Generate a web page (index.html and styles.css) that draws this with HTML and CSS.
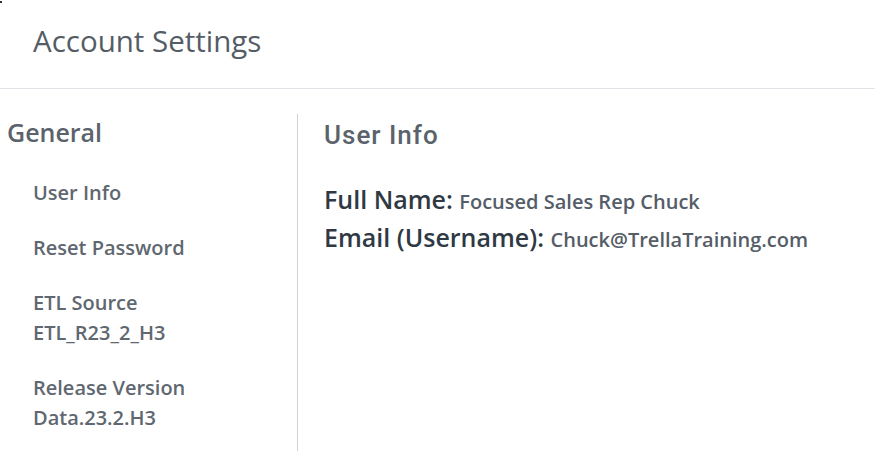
FILE: index.html
```html
<!DOCTYPE html>
<html lang="en">
<head>
<meta charset="utf-8">
<title>Account Settings</title>
<link rel="stylesheet" href="styles.css">
</head>
<body>
<span class="corner-dot"></span>
<header class="page-header">
  <h1 class="page-title">Account Settings</h1>
</header>
<div class="layout">
  <aside class="sidebar">
    <h2 class="sidebar-title">General</h2>
    <ul class="nav">
      <li class="nav-item">User Info</li>
      <li class="nav-item">Reset Password</li>
      <li class="nav-item">ETL Source<br>ETL_R23_2_H3</li>
      <li class="nav-item">Release Version<br>Data.23.2.H3</li>
    </ul>
  </aside>
  <main class="content">
    <h2 class="content-title">User Info</h2>
    <div class="info-row"><span class="info-label">Full Name:</span> <span class="info-value">Focused Sales Rep Chuck</span></div>
    <div class="info-row"><span class="info-label">Email (Username):</span> <span class="info-value">Chuck@TrellaTraining.com</span></div>
  </main>
</div>
</body>
</html>
```
FILE: styles.css
```css
html, body {
  margin: 0;
  padding: 0;
  background: #ffffff;
  font-family: "Open Sans", "Liberation Sans", sans-serif;
  height: 100%;
  overflow: hidden;
}

.corner-dot {
  position: absolute;
  left: 0;
  top: 1px;
  width: 2px;
  height: 2px;
  background: #333;
}

.page-header {
  height: 89px;
  box-sizing: border-box;
  padding: 21px 0 0 33px;
  border-bottom: 1px solid #dfe2e6;
}

.page-title {
  margin: 0;
  font-size: 29.5px;
  line-height: 40px;
  font-weight: 400;
  color: #545c66;
}

.layout {
  display: flex;
  margin-top: 25px;
  height: 337px;
}

.sidebar {
  width: 298px;
  flex: 0 0 298px;
  box-sizing: border-box;
  border-right: 1px solid #cfd2d6;
  padding: 3px 0 0 7px;
}

.sidebar-title {
  margin: 0;
  font-size: 25px;
  line-height: 30px;
  font-weight: 600;
  color: #5a626b;
}

.nav {
  list-style: none;
  margin: 31px 0 0 26px;
  padding: 0;
  display: flex;
  flex-direction: column;
  gap: 25px;
}

.nav-item {
  font-size: 20px;
  line-height: 30px;
  font-weight: 600;
  color: #5f6770;
}

.content {
  padding: 6px 0 0 26px;
}

.content-title {
  margin: 0;
  font-family: Roboto, "Open Sans", sans-serif;
  font-size: 26px;
  line-height: 30px;
  font-weight: 500;
  letter-spacing: 1px;
  color: #5a626b;
}

.info-row {
  font-size: 25px;
  line-height: 38px;
}

.info-row:first-of-type {
  margin-top: 30px;
}

.info-label {
  font-weight: 600;
  color: #2f3944;
}

.info-value {
  font-size: 20px;
  line-height: 1;
  font-weight: 600;
  color: #555d67;
}
```
